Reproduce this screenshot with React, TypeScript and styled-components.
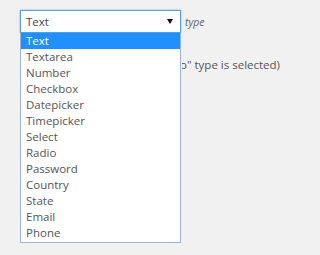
import React from "react";
import styled, { createGlobalStyle } from "styled-components";

const GlobalStyle = createGlobalStyle`
  html, body {
    margin: 0;
    padding: 0;
    background: #f1f1f1;
  }
  body {
    font-family: "Open Sans", "Noto Sans", sans-serif;
    font-size: 11px;
    color: #555;
  }
`;

const Page = styled.div`
  width: 300px;
  height: 255px;
  overflow: hidden;
  padding: 10px 0 0 20px;
  box-sizing: border-box;
`;

const FieldRow = styled.div`
  display: flex;
  align-items: center;
  gap: 4px;
`;

const SelectWrap = styled.div`
  position: relative;
  width: 161px;
`;

const SelectBox = styled.div`
  height: 23px;
  box-sizing: border-box;
  border: 1px solid #5b9dd9;
  background: #fff;
  display: flex;
  align-items: center;
  justify-content: space-between;
  padding: 0 5px 0 5px;
  color: #444;
  font-size: 11.5px;
  box-shadow: 0 0 2px rgba(30, 140, 190, 0.5);
`;

const Arrow = styled.span`
  width: 0;
  height: 0;
  border-left: 3px solid transparent;
  border-right: 3px solid transparent;
  border-top: 5px solid #111;
  margin-right: 2px;
`;

const Hint = styled.span`
  font-style: italic;
  color: #666;
  font-size: 10.5px;
`;

const OptionList = styled.ul`
  position: absolute;
  top: 23px;
  left: 0;
  width: 161px;
  box-sizing: border-box;
  margin: 0;
  padding: 0 0 1px;
  list-style: none;
  background: #fff;
  border: 1px solid #9bb4df;
  border-top: none;
  z-index: 2;
`;

const Option = styled.li<{ $active?: boolean }>`
  height: 16px;
  line-height: 16px;
  padding-left: 5px;
  font-size: 11.5px;
  background: ${(p) => (p.$active ? "#1e90ff" : "transparent")};
  color: ${(p) => (p.$active ? "#fff" : "#555")};
`;

// description row; its left part lies hidden under the open list
const Description = styled.div`
  display: flex;
  justify-content: flex-end;
  width: 98px;
  margin: 24px 0 0 162px;
  overflow: hidden;
  white-space: nowrap;
  font-size: 11.5px;
`;

const options = [
  "Text",
  "Textarea",
  "Number",
  "Checkbox",
  "Datepicker",
  "Timepicker",
  "Select",
  "Radio",
  "Password",
  "Country",
  "State",
  "Email",
  "Phone",
];

export default function App() {
  return (
    <>
      <GlobalStyle />
      <Page>
        <FieldRow>
          <SelectWrap>
            <SelectBox>
              <span>Text</span>
              <Arrow />
            </SelectBox>
            <OptionList>
              {options.map((o, i) => (
                <Option key={o} $active={i === 0}>
                  {o}
                </Option>
              ))}
            </OptionList>
          </SelectWrap>
          <Hint>type</Hint>
        </FieldRow>
        <Description>
          <span>(Only when "Radio" type is selected)</span>
        </Description>
      </Page>
    </>
  );
}
